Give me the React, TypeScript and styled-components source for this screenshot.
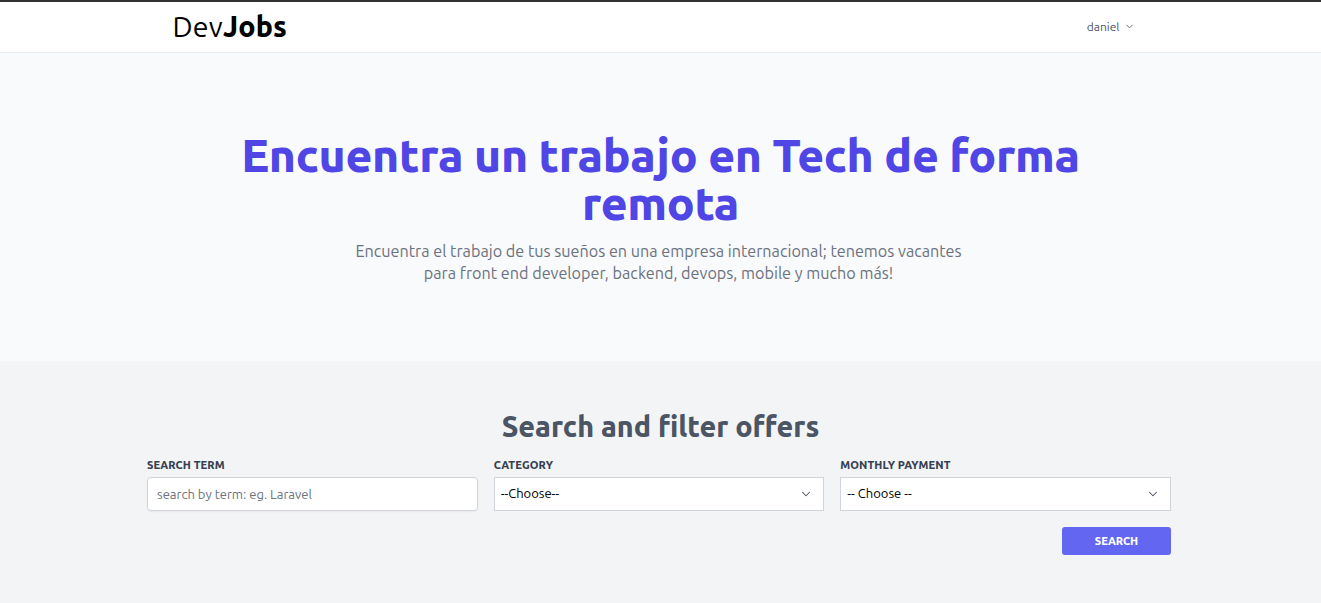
import React from "react";
import styled, { createGlobalStyle } from "styled-components";

const Global = createGlobalStyle`
  * { box-sizing: border-box; }
  body {
    margin: 0;
    font-family: "Ubuntu", "Lato", "Noto Sans", sans-serif;
    background: #f3f4f6;
  }
`;

const Page = styled.div`
  min-height: 603px;
  border-top: 2px solid #333333;
  background: #f3f4f6;
`;

const Nav = styled.nav`
  background: #ffffff;
  border-bottom: 1px solid #eceef1;
  height: 51px;
`;

const NavInner = styled.div`
  width: 976px;
  margin: 0 auto;
  height: 100%;
  display: flex;
  align-items: center;
  justify-content: space-between;
  padding-bottom: 2px;
`;

const Logo = styled.a`
  font-size: 28.5px;
  color: #000;
  text-decoration: none;
  letter-spacing: 0.2px;
  strong { font-weight: 800; }
`;

const UserMenu = styled.button`
  border: 0;
  background: none;
  font-family: inherit;
  font-size: 12px;
  color: #4b5563;
  display: flex;
  align-items: center;
  gap: 4px;
  margin-right: 14px;
  cursor: pointer;
  padding: 0;
`;

const Hero = styled.section`
  background: #f9fafb;
  height: 308px;
  padding-top: 78px;
  text-align: center;
`;

const HeroTitle = styled.h1`
  margin: 0 auto;
  max-width: 880px;
  font-size: 46.2px;
  line-height: 48px;
  font-weight: 800;
  color: #4f46e5;
  letter-spacing: -0.3px;
`;

const HeroText = styled.p`
  margin: 13px auto 0;
  max-width: 624px;
  font-size: 16.2px;
  line-height: 22px;
  color: #6b7280;
  transform: translateX(-2px);
`;

const SearchSection = styled.section`
  padding-top: 45px;
`;

const SearchTitle = styled.h2`
  margin: 0;
  text-align: center;
  font-size: 28.7px;
  line-height: 40px;
  font-weight: 800;
  color: #4b5563;
`;

const Form = styled.form`
  width: 1024px;
  margin: 13px 0 0 calc(50% - 513.5px);
`;

const Grid = styled.div`
  display: grid;
  grid-template-columns: repeat(3, 1fr);
  gap: 16px;
`;

const Field = styled.div`
  display: flex;
  flex-direction: column;
`;

const Label = styled.label`
  font-size: 11px;
  font-weight: 800;
  color: #374151;
  text-transform: uppercase;
  margin-bottom: 6px;
  letter-spacing: 0.1px;
`;

const Input = styled.input`
  height: 34px;
  border: 1px solid #d1d5db;
  border-radius: 4px;
  padding: 0 9px;
  font-family: inherit;
  font-size: 13px;
  background: #fff;
  box-shadow: 0 1px 2px rgba(0, 0, 0, 0.05);
  &::placeholder { color: #6b7280; }
`;

const SelectWrap = styled.div`
  position: relative;
  svg {
    position: absolute;
    right: 11px;
    top: 10px;
    pointer-events: none;
  }
`;

const Select = styled.select`
  width: 100%;
  height: 34px;
  border: 1px solid #d1d5db;
  border-radius: 0;
  padding: 0 6px 2px;
  font-family: inherit;
  font-size: 13px;
  color: #000;
  background: #fff;
  appearance: none;
`;

const Actions = styled.div`
  display: flex;
  justify-content: flex-end;
  margin-top: 16px;
`;

const Button = styled.button`
  width: 109px;
  height: 28px;
  border: 0;
  border-radius: 3px;
  background: #6366f1;
  color: #fff;
  font-family: inherit;
  font-size: 11px;
  font-weight: 800;
  text-transform: uppercase;
  cursor: pointer;
`;

const Chevron = ({ size = 12, color = "#4b5563" }: { size?: number; color?: string }) => (
  <svg width={size} height={size} viewBox="0 0 20 20" fill="none">
    <path d="M5 7.5l5 5 5-5" stroke={color} strokeWidth="1.5" strokeLinecap="round" strokeLinejoin="round" />
  </svg>
);

export default function App() {
  return (
    <Page>
      <Global />
      <Nav>
        <NavInner>
          <Logo href="#">
            Dev<strong>Jobs</strong>
          </Logo>
          <UserMenu type="button">
            daniel
            <Chevron size={11} />
          </UserMenu>
        </NavInner>
      </Nav>
      <Hero>
        <HeroTitle>Encuentra un trabajo en Tech de forma remota</HeroTitle>
        <HeroText>
          Encuentra el trabajo de tus sueños en una empresa internacional; tenemos vacantes para front end
          developer, backend, devops, mobile y mucho más!
        </HeroText>
      </Hero>
      <SearchSection>
        <SearchTitle>Search and filter offers</SearchTitle>
        <Form onSubmit={(e) => e.preventDefault()}>
          <Grid>
            <Field>
              <Label>Search term</Label>
              <Input placeholder="search by term: eg. Laravel" />
            </Field>
            <Field>
              <Label>Category</Label>
              <SelectWrap>
                <Select defaultValue="">
                  <option value="">--Choose--</option>
                </Select>
                <Chevron size={14} />
              </SelectWrap>
            </Field>
            <Field>
              <Label>Monthly payment</Label>
              <SelectWrap>
                <Select defaultValue="">
                  <option value="">-- Choose --</option>
                </Select>
                <Chevron size={14} />
              </SelectWrap>
            </Field>
          </Grid>
          <Actions>
            <Button type="submit">Search</Button>
          </Actions>
        </Form>
      </SearchSection>
    </Page>
  );
}
